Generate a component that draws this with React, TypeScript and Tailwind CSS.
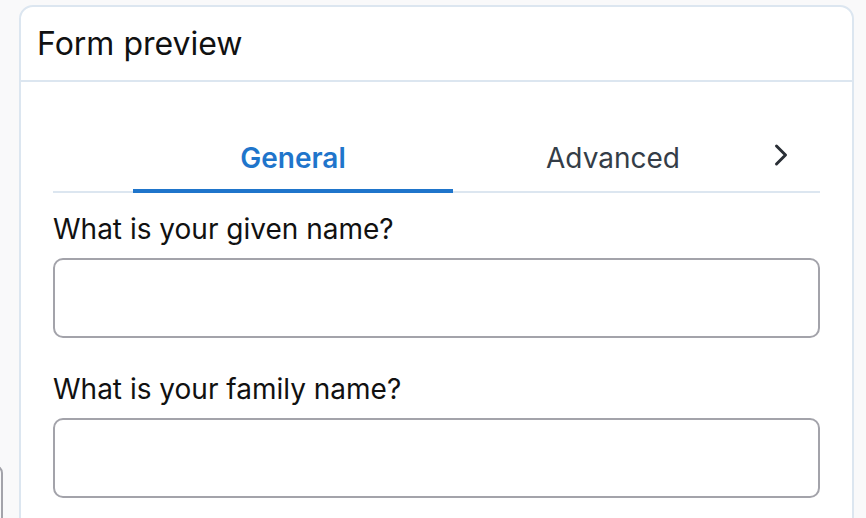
import { ChevronRight } from "lucide-react";

function Field({ label }: { label: string }) {
  return (
    <div className="flex flex-col">
      <label className="text-[28px] leading-[32px] text-[#111] font-normal">{label}</label>
      <input className="mt-[13px] h-[80px] w-full rounded-[10px] border-2 border-[#a3a3aa] bg-white outline-none" />
    </div>
  );
}

export default function App() {
  return (
    <div className="relative h-[518px] w-[866px] overflow-hidden bg-[#f9f9fa] pt-[5px] pl-[19px] font-['Inter',sans-serif]">
      <div className="absolute left-[-40px] top-[465px] h-[80px] w-[43px] rounded-[8px] border-2 border-[#a3a3aa]" />
      <div className="w-[835px] h-[540px] rounded-[14px] border-2 border-[#dce6f0] bg-white">
        <div className="flex h-[75px] items-center border-b-2 border-[#dce6f0] px-[16px]">
          <h2 className="text-[32px] font-normal text-[#111]">Form preview</h2>
        </div>
        <div className="px-[32px] pt-[42px]">
          <div className="flex h-[69px] items-stretch border-b-2 border-[#dce6f0]">
            <div className="w-[80px]" />
            <button className="relative w-[320px] text-[28px] font-semibold text-[#1f75cb]">
              General
              <span className="absolute bottom-[-2px] left-0 h-[4px] w-full bg-[#1f75cb]" />
            </button>
            <button className="w-[320px] text-[28px] font-normal text-[#343d47]">Advanced</button>
            <div className="flex flex-1 items-center ml-[-10px] pb-[6px]">
              <ChevronRight className="h-[36px] w-[36px] text-[#2a2f36]" strokeWidth={2} />
            </div>
          </div>
          <div className="mt-[20px] flex flex-col gap-[35px]">
            <Field label="What is your given name?" />
            <Field label="What is your family name?" />
          </div>
        </div>
      </div>
    </div>
  );
}
